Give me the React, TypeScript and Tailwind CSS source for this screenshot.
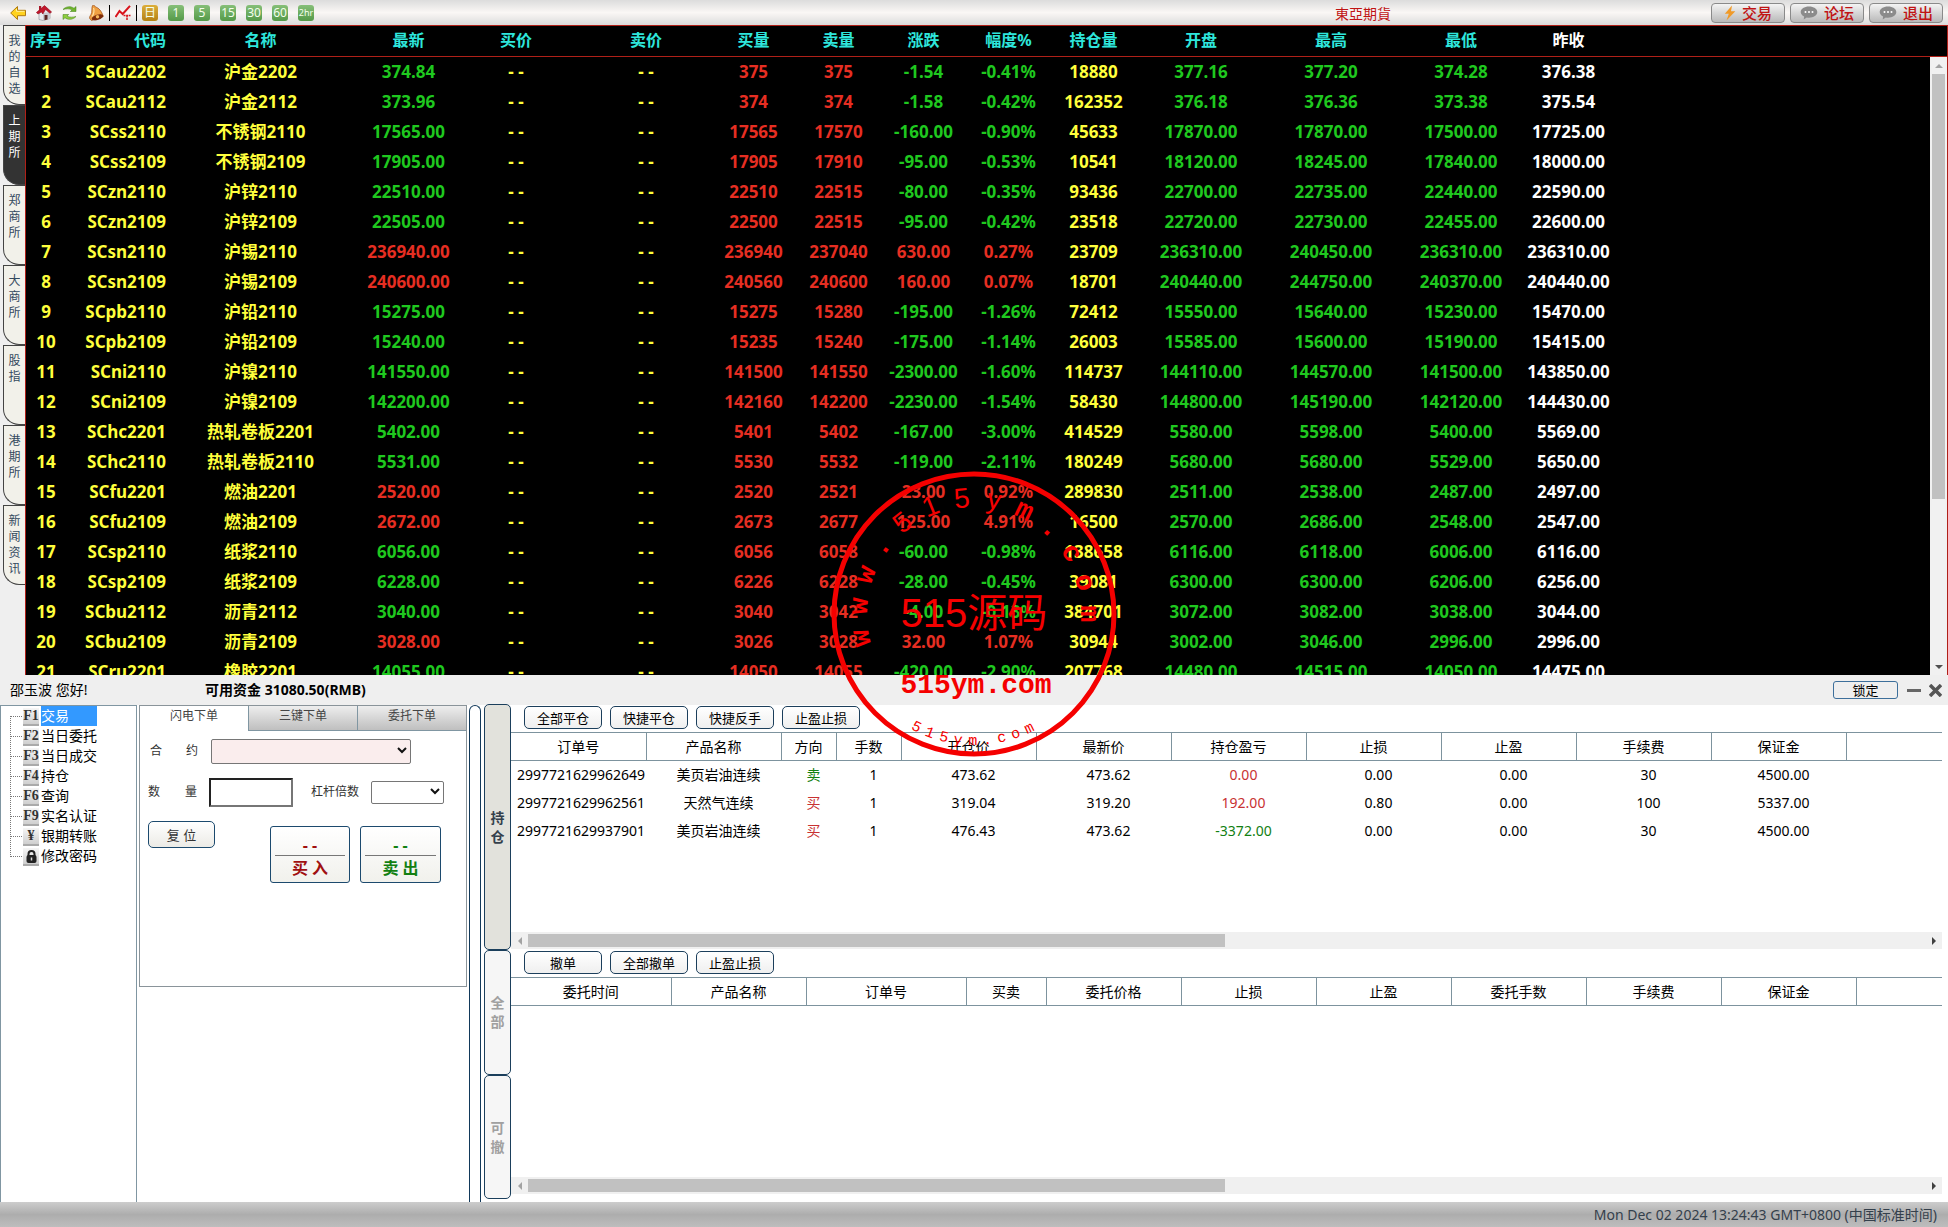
import type { ReactNode } from 'react';
import clsx from 'clsx';

const sideTabs = ['我的自选', '上期所', '郑商所', '大商所', '股指', '港期所', '新闻资讯'];

const quoteCols = [
	{ title: '序号', width: 'w-[40px]' },
	{ title: '代码', width: 'w-[100px]' },
	{ title: '名称', width: 'w-[200px]' },
	{ title: '最新', width: 'w-[85px]' },
	{ title: '买价', width: 'w-[130px]' },
	{ title: '卖价', width: 'w-[130px]' },
	{ title: '买量', width: 'w-[85px]' },
	{ title: '卖量', width: 'w-[85px]' },
	{ title: '涨跌', width: 'w-[85px]' },
	{ title: '幅度%', width: 'w-[85px]' },
	{ title: '持仓量', width: 'w-[85px]' },
	{ title: '开盘', width: 'w-[130px]' },
	{ title: '最高', width: 'w-[130px]' },
	{ title: '最低', width: 'w-[130px]' },
	{ title: '昨收', width: 'w-[85px]' },
];

// code, name, last, bid vol, ask vol, change, percent, open interest, open, high, low, prev close
const quotes: string[][] = [
	['SCau2202', '沪金2202', '374.84', '375', '375', '-1.54', '-0.41%', '18880', '377.16', '377.20', '374.28', '376.38'],
	['SCau2112', '沪金2112', '373.96', '374', '374', '-1.58', '-0.42%', '162352', '376.18', '376.36', '373.38', '375.54'],
	['SCss2110', '不锈钢2110', '17565.00', '17565', '17570', '-160.00', '-0.90%', '45633', '17870.00', '17870.00', '17500.00', '17725.00'],
	['SCss2109', '不锈钢2109', '17905.00', '17905', '17910', '-95.00', '-0.53%', '10541', '18120.00', '18245.00', '17840.00', '18000.00'],
	['SCzn2110', '沪锌2110', '22510.00', '22510', '22515', '-80.00', '-0.35%', '93436', '22700.00', '22735.00', '22440.00', '22590.00'],
	['SCzn2109', '沪锌2109', '22505.00', '22500', '22515', '-95.00', '-0.42%', '23518', '22720.00', '22730.00', '22455.00', '22600.00'],
	['SCsn2110', '沪锡2110', '236940.00', '236940', '237040', '630.00', '0.27%', '23709', '236310.00', '240450.00', '236310.00', '236310.00'],
	['SCsn2109', '沪锡2109', '240600.00', '240560', '240600', '160.00', '0.07%', '18701', '240440.00', '244750.00', '240370.00', '240440.00'],
	['SCpb2110', '沪铅2110', '15275.00', '15275', '15280', '-195.00', '-1.26%', '72412', '15550.00', '15640.00', '15230.00', '15470.00'],
	['SCpb2109', '沪铅2109', '15240.00', '15235', '15240', '-175.00', '-1.14%', '26003', '15585.00', '15600.00', '15190.00', '15415.00'],
	['SCni2110', '沪镍2110', '141550.00', '141500', '141550', '-2300.00', '-1.60%', '114737', '144110.00', '144570.00', '141500.00', '143850.00'],
	['SCni2109', '沪镍2109', '142200.00', '142160', '142200', '-2230.00', '-1.54%', '58430', '144800.00', '145190.00', '142120.00', '144430.00'],
	['SChc2201', '热轧卷板2201', '5402.00', '5401', '5402', '-167.00', '-3.00%', '414529', '5580.00', '5598.00', '5400.00', '5569.00'],
	['SChc2110', '热轧卷板2110', '5531.00', '5530', '5532', '-119.00', '-2.11%', '180249', '5680.00', '5680.00', '5529.00', '5650.00'],
	['SCfu2201', '燃油2201', '2520.00', '2520', '2521', '23.00', '0.92%', '289830', '2511.00', '2538.00', '2487.00', '2497.00'],
	['SCfu2109', '燃油2109', '2672.00', '2673', '2677', '125.00', '4.91%', '16500', '2570.00', '2686.00', '2548.00', '2547.00'],
	['SCsp2110', '纸浆2110', '6056.00', '6056', '6058', '-60.00', '-0.98%', '138658', '6116.00', '6118.00', '6006.00', '6116.00'],
	['SCsp2109', '纸浆2109', '6228.00', '6226', '6228', '-28.00', '-0.45%', '39081', '6300.00', '6300.00', '6206.00', '6256.00'],
	['SCbu2112', '沥青2112', '3040.00', '3040', '3042', '-4.00', '-0.13%', '384701', '3072.00', '3082.00', '3038.00', '3044.00'],
	['SCbu2109', '沥青2109', '3028.00', '3026', '3028', '32.00', '1.07%', '30944', '3002.00', '3046.00', '2996.00', '2996.00'],
	['SCru2201', '橡胶2201', '14055.00', '14050', '14055', '-420.00', '-2.90%', '207768', '14480.00', '14515.00', '14050.00', '14475.00'],
];

const menu = [
	{ icon: 'F1', label: '交易' },
	{ icon: 'F2', label: '当日委托' },
	{ icon: 'F3', label: '当日成交' },
	{ icon: 'F4', label: '持仓' },
	{ icon: 'F6', label: '查询' },
	{ icon: 'F9', label: '实名认证' },
	{ icon: '¥', label: '银期转账' },
	{ icon: 'lock', label: '修改密码' },
];

const positionCols = [
	{ title: '订单号', width: 'w-[135px]' },
	{ title: '产品名称', width: 'w-[135px]' },
	{ title: '方向', width: 'w-[55px]' },
	{ title: '手数', width: 'w-[65px]' },
	{ title: '开仓价', width: 'w-[135px]' },
	{ title: '最新价', width: 'w-[135px]' },
	{ title: '持仓盈亏', width: 'w-[135px]' },
	{ title: '止损', width: 'w-[135px]' },
	{ title: '止盈', width: 'w-[135px]' },
	{ title: '手续费', width: 'w-[135px]' },
	{ title: '保证金', width: 'w-[135px]' },
];

const positions = [
	['2997721629962649', '美页岩油连续', '卖', '1', '473.62', '473.62', '0.00', '0.00', '0.00', '30', '4500.00'],
	['2997721629962561', '天然气连续', '买', '1', '319.04', '319.20', '192.00', '0.80', '0.00', '100', '5337.00'],
	['2997721629937901', '美页岩油连续', '买', '1', '476.43', '473.62', '-3372.00', '0.00', '0.00', '30', '4500.00'],
];

const entrustCols = [
	{ title: '委托时间', width: 'w-[160px]' },
	{ title: '产品名称', width: 'w-[135px]' },
	{ title: '订单号', width: 'w-[160px]' },
	{ title: '买卖', width: 'w-[80px]' },
	{ title: '委托价格', width: 'w-[135px]' },
	{ title: '止损', width: 'w-[135px]' },
	{ title: '止盈', width: 'w-[135px]' },
	{ title: '委托手数', width: 'w-[135px]' },
	{ title: '手续费', width: 'w-[135px]' },
	{ title: '保证金', width: 'w-[135px]' },
];

const GREEN = 'text-[#1fc81f]';
const RED = 'text-[#e62e22]';
const YELLOW = 'text-[#ffff3c]';

function IconButton({ label, children }: { label: string; children: ReactNode }) {
	return (
		<button type="button" aria-label={label} className="flex h-4 w-4 items-center justify-center">
			{children}
		</button>
	);
}

function ToolIcons() {
	return (
		<div className="flex items-center gap-[10px] pl-[10px]">
			<IconButton label="后退">
				<svg width="16" height="16" viewBox="0 0 16 16">
					<path d="M7.5 1.5v3.8h8v5.4h-8v3.8L.7 8z" fill="#ffd21f" stroke="#b07a10" strokeLinejoin="round" />
					<path d="M6.5 4v2.3h8" fill="none" stroke="#fff0a0" />
				</svg>
			</IconButton>
			<IconButton label="首页">
				<svg width="16" height="16" viewBox="0 0 16 16">
					<path d="M3 7v7.5l4 1 7-2V7L8.500 3z" fill="#e9e9ee" stroke="#8a8a92" strokeWidth=".6" />
					<path d="M7 8l7-1v6.500l-7 2z" fill="#c9c9d1" />
					<path d="M8.500.600L15.600 7l-1.600 1.300L9.500 4.500 6.800 9 5.500 7 2 9 .400 7.500z" fill="#c3162c" stroke="#8c0f1f" strokeWidth=".6" />
					<path d="M3 1h2.200v3.500L3 6z" fill="#a8182a" />
					<path d="M8.500 10h3v4.500l-3 .8z" fill="#5a2222" />
				</svg>
			</IconButton>
			<IconButton label="刷新">
				<svg width="16" height="16" viewBox="0 0 16 16">
					<path d="M1 4.500C4 1 9.500 1 12 3.300L14 1.500v5H8.300L10 5C7.500 3.300 4 3.800 1 4.500z" fill="#6fb52c" stroke="#3f7d12" strokeWidth=".5" />
					<path d="M14 11.500C11 15 5.500 15 3 12.700L1 14.500v-5h5.700L5 11c2.500 1.700 6 1.200 9 .5z" fill="#8fce3f" stroke="#3f7d12" strokeWidth=".5" />
				</svg>
			</IconButton>
			<IconButton label="提醒">
				<svg width="16" height="16" viewBox="0 0 16 16">
					<path d="M4.500.600c1.500-.6 2.500.2 3 1.400C11 3 13.500 6 15.300 11.500L3.500 15.500C.5 13 1.500 12 3 9.500 4.500 7 3.300 3 4.500.600z" fill="#f0a042" stroke="#9a4a12" strokeWidth=".7" />
					<path d="M5.500 3c1 2 .5 6-1.500 8.500" fill="none" stroke="#ffe0a0" strokeWidth="1.200" />
					<ellipse cx="9.500" cy="12.300" rx="6" ry="2.600" transform="rotate(-18 9.500 12.300)" fill="#7c2d0c" />
					<circle cx="9.500" cy="11.800" r="1.700" fill="#f7b85c" />
				</svg>
			</IconButton>
			<span className="-mx-[5px] h-4 w-px bg-black" />
			<IconButton label="走势图">
				<svg width="16" height="16" viewBox="0 0 16 16" fill="none" stroke="#d8141c">
					<path d="M.5 12l4-6 3.200 3L15 .800" strokeWidth="2" />
					<path d="M8.500 10.500h7M12 10.500v5" strokeWidth="1.500" strokeDasharray="2 .6" />
				</svg>
			</IconButton>
			<span className="-mx-[5px] h-4 w-px bg-black" />
			{['日', '1', '5', '15', '30', '60', '2hr'].map((item, i) => (
				<button
					key={item}
					type="button"
					className={clsx(
						'flex h-4 w-4 items-center justify-center rounded-[3px] leading-4 text-[#f4ffee]',
						i === 0 ? 'bg-linear-to-b from-[#dcae3a] to-[#b58212] text-[12px]' : 'bg-linear-to-b from-[#86bf78] to-[#549a48]',
						i > 0 && i < 6 && 'text-[12px]',
						i === 6 && 'text-[9px]',
					)}
				>
					{item}
				</button>
			))}
		</div>
	);
}

function Chat() {
	return (
		<svg width="18" height="14" viewBox="0 0 18 14">
			<path d="M9 .5c4.700 0 8.300 2.400 8.300 5.600S13.700 11.700 9 11.700c-.8 0-1.500 0-2.200-.2L3.700 13.600l.4-3C2 9.600.700 8 .700 6.100.700 2.900 4.300.5 9 .5z" fill="#8b8b8b" />
			<circle cx="5.500" cy="6" r="1" fill="#fff" />
			<circle cx="9" cy="6" r="1" fill="#fff" />
			<circle cx="12.500" cy="6" r="1" fill="#fff" />
		</svg>
	);
}

function TopBar() {
	const links = ['交易', '论坛', '退出'];
	return (
		<header className="flex h-[25px] shrink-0 items-center bg-linear-to-b from-[#dcdcdc] via-[#faf7f5] to-[#dcdcdc]">
			<ToolIcons />
			<h1 className="mr-[320px] ml-auto font-['Noto_Sans_CJK_TC',sans-serif] text-[14px] leading-4 text-[#c01414]">東亞期貨</h1>
			<div className="flex gap-[5px] pr-[5px]">
				{links.map((link, i) => (
					<button
						key={link}
						type="button"
						className="flex h-5 w-[74px] items-center justify-center gap-[6px] rounded-[4px] border border-[#8a8a8a] bg-linear-to-b from-[#f4f4f4] to-[#b9b9b9] text-[15px] leading-4 font-medium text-[#c01414]"
					>
						{i === 0 ? (
							<svg width="12" height="16" viewBox="0 0 12 16">
								<path d="M8 .5L.800 8.700h4L2.500 15.500 11.300 6.300H7z" fill="#f09a28" />
							</svg>
						) : (
							<Chat />
						)}
						{link}
					</button>
				))}
			</div>
		</header>
	);
}

function SideTabs() {
	return (
		<nav className="flex w-[25px] shrink-0 flex-col bg-[#efefef] pl-[3px]">
			{sideTabs.map((tab) => (
				<button
					key={tab}
					type="button"
					className={clsx(
						'flex h-20 w-[22px] justify-center rounded-bl-[16px] border border-r-0 border-[#444] pt-[7px] text-[12px] leading-4',
						tab === '上期所' ? 'bg-[#333] text-white' : 'bg-[#f2f1ea] text-[#34495e]',
					)}
				>
					<span className="w-[12px] break-all">{tab}</span>
				</button>
			))}
		</nav>
	);
}

function QuoteRow({ row, index }: { row: string[]; index: number }) {
	const [code, name, last, bidVol, askVol, change, percent, interest, open, high, low, prev] = row;
	const trend = change.startsWith('-') ? GREEN : RED;
	return (
		<tr className="h-[30px]">
			<td className={YELLOW}>{index + 1}</td>
			<td className={clsx('text-right', YELLOW)}>{code}</td>
			<td className={clsx('pr-[11px]', YELLOW)}>{name}</td>
			<td className={trend}>{last}</td>
			<td className={YELLOW}>- -</td>
			<td className={YELLOW}>- -</td>
			<td className={RED}>{bidVol}</td>
			<td className={RED}>{askVol}</td>
			<td className={trend}>{change}</td>
			<td className={trend}>{percent}</td>
			<td className={YELLOW}>{interest}</td>
			<td className={GREEN}>{open}</td>
			<td className={GREEN}>{high}</td>
			<td className={GREEN}>{low}</td>
			<td className="text-white">{prev}</td>
			<td />
		</tr>
	);
}

function Market() {
	return (
		<section className="flex min-h-0 flex-1 bg-[#efefef]">
			<SideTabs />
			<div className="relative min-w-0 flex-1 overflow-hidden border border-b-0 border-[#b02018] bg-black">
				<table className="w-full table-fixed border-collapse text-center text-[17px] leading-[29px] font-bold whitespace-nowrap">
					<thead>
						<tr className="h-[30px] border-b border-[#b02018] text-[16px]">
							{quoteCols.map((col) => (
								<th
									key={col.title}
									className={clsx(
										col.width,
										col.title === '昨收' ? 'text-white' : 'text-[#2ee6dc]',
										col.title === '代码' && 'text-right',
										col.title === '名称' && 'pr-[11px]',
									)}
								>
									{col.title}
								</th>
							))}
							<th />
						</tr>
					</thead>
					<tbody>
						{quotes.map((row, i) => (
							<QuoteRow key={row[0]} row={row} index={i} />
						))}
					</tbody>
				</table>
				<div className="absolute top-[31px] right-0 bottom-0 flex w-[17px] flex-col items-center bg-[#f1f1f1]">
					<span className="flex h-[17px] shrink-0 items-center">
						<i className="border-x-4 border-b-4 border-x-transparent border-b-[#a3a3a3]" />
					</span>
					<span className="h-[425px] w-[13px] bg-[#c1c1c1]" />
					<span className="mt-auto flex h-[17px] shrink-0 items-center">
						<i className="border-x-4 border-t-4 border-x-transparent border-t-[#505050]" />
					</span>
				</div>
			</div>
		</section>
	);
}

function AccountBar() {
	return (
		<div className="flex h-[30px] shrink-0 items-center bg-[#efefef] text-[14px] leading-5 text-black">
			<span className="w-[205px] pl-[10px]">邵玉波 您好!</span>
			<b>可用资金 31080.50(RMB)</b>
			<button type="button" className="ml-auto h-[18px] w-[65px] rounded-[3px] border border-[#3d6f9b] text-[13px] leading-4">
				锁定
			</button>
			<button type="button" aria-label="最小化" className="ml-[9px] flex h-4 w-[14px] items-center">
				<span className="h-[3px] w-full bg-[#666]" />
			</button>
			<button type="button" aria-label="关闭" className="mr-[6px] ml-2">
				<svg width="13" height="13" viewBox="0 0 13 13" stroke="#555" strokeWidth="3.500">
					<path d="M1 1l11 11M12 1L1 12" />
				</svg>
			</button>
		</div>
	);
}

function Menu() {
	return (
		<nav className="w-[137px] shrink-0 border border-b-0 border-[#8096a2] bg-white pl-[9px]">
			<ul>
				{menu.map((item, i) => (
					<li key={item.label} className="flex h-5">
						<span className={clsx('w-[13px] shrink-0', i > 0 && '-mt-[10px]', i === 0 && 'pt-[10px]')}>
							<i className={clsx('block w-3 border-b border-l border-dotted border-[#777]', i > 0 ? 'h-[21px]' : 'h-px')} />
						</span>
						<a href="#" className="flex items-start text-[14px] leading-5 text-black">
							<span className="mt-[2px] flex h-[18px] w-4 items-center justify-center border-b-2 border-[#aaa] bg-linear-to-b from-[#f6f6f6] to-[#cfcfcf] font-['Liberation_Serif',serif] text-[14px] leading-4 font-bold text-[#333]">
								{item.icon === 'lock' ? (
									<svg width="11" height="13" viewBox="0 0 11 13">
										<path d="M2.500 6V4a3 3 0 016 0v2" fill="none" stroke="#222" strokeWidth="2" />
										<rect x=".5" y="5" width="10" height="8" rx="2" fill="#222" />
										<path d="M5.500 7.500v3" stroke="#ddd" strokeWidth="1.500" />
									</svg>
								) : (
									item.icon
								)}
							</span>
							<span className={clsx('ml-[2px]', i === 0 && 'w-14 bg-[#3399ff] text-white')}>{item.label}</span>
						</a>
					</li>
				))}
			</ul>
		</nav>
	);
}

function Select({ id, className }: { id: string; className: string }) {
	return (
		<span className="relative inline-flex">
			<select id={id} className={clsx('appearance-none rounded-[2px] border border-[#767676]', className)} />
			<svg className="pointer-events-none absolute top-1/2 right-1 -mt-1" width="10" height="7" viewBox="0 0 10 7">
				<path d="M1 1l4 4 4-4" fill="none" stroke="#111" strokeWidth="2" />
			</svg>
		</span>
	);
}

function OrderForm() {
	const tabs = ['闪电下单', '三键下单', '委托下单'];
	return (
		<form className="ml-[2px] flex h-[282px] w-[328px] shrink-0 flex-col border border-[#8a949a] bg-white text-[12px] leading-4 text-[#333]">
			<div className="flex h-[25px] w-full text-[#444]">
				{tabs.map((tab, i) => (
					<button
						key={tab}
						type="button"
						className={clsx(
							'flex-1 pb-[5px]',
							i === 0 ? 'bg-white' : 'border-b border-l border-[#8096a2] bg-linear-to-b from-[#eee] to-[#bfbfbf]',
						)}
					>
						{tab}
					</button>
				))}
			</div>
			<div className="mt-[7px] flex h-[26px] w-full items-center pl-[10px]">
				<label htmlFor="contract" className="flex w-12 justify-between">
					<span>合</span>
					<span>约</span>
				</label>
				<span className="ml-[13px] flex">
					<Select id="contract" className="h-[25px] w-[200px] bg-[#faeded]" />
				</span>
			</div>
			<div className="mt-[13px] flex h-[30px] items-center pl-[8px]">
				<label htmlFor="amount" className="flex w-[49px] justify-between">
					<span>数</span>
					<span>量</span>
				</label>
				<input id="amount" type="text" className="ml-3 h-[29px] w-[84px] border-2 border-t-[#222] border-r-[#767676] border-b-[#767676] border-l-[#222] px-1" />
				<label htmlFor="lever" className="mr-3 ml-[18px]">
					杠杆倍数
				</label>
				<Select id="lever" className="h-[23px] w-[73px] bg-white" />
			</div>
			<div className="mt-[14px] flex pl-2">
				<button type="button" className="h-[27px] w-[67px] rounded-[5px] border border-[#1c4a6e] bg-linear-to-b from-white to-[#ecebe6] text-[13px] leading-4">
					复 位
				</button>
				<div className="mt-[5px] ml-[55px] flex gap-[10px] text-[16px] leading-5 font-bold">
					<button type="button" className="flex h-[57px] w-20 flex-col items-center rounded-[3px] border border-[#1c4a6e] bg-linear-to-b from-white to-[#f1f1ec] px-1 text-[#a01010]">
						<span className="w-full border-b border-[#777] pt-2">- -</span>
						<span className="pt-[2px]">买 入</span>
					</button>
					<button type="button" className="flex h-[57px] w-[81px] flex-col items-center rounded-[3px] border border-[#1c4a6e] bg-linear-to-b from-white to-[#f1f1ec] px-1 text-[#128012]">
						<span className="w-full border-b border-[#777] pt-2">- -</span>
						<span className="pt-[2px]">卖 出</span>
					</button>
				</div>
			</div>
		</form>
	);
}

function ViewTabs() {
	const base = 'flex items-center justify-center rounded-[5px] border border-[#1b3f5c] text-[14px] leading-[19px] font-bold';
	return (
		<>
			<div className="ml-[2px] w-3 shrink-0 rounded-t-[6px] border border-b-0 border-[#12395a]" />
			<div className="-mt-px ml-[3px] flex w-[27px] shrink-0 flex-col pb-[3px]">
				<button type="button" className={clsx(base, 'h-[246px] bg-[#e2e2dc] text-[#34404c]')}>
					<span className="w-[14px] break-all">持仓</span>
				</button>
				<button type="button" className={clsx(base, 'flex-1 bg-[#f6f6f6] text-[#a0a0a0]')}>
					<span className="w-[14px] break-all">全部</span>
				</button>
				<button type="button" className={clsx(base, 'flex-1 bg-[#f6f6f6] text-[#a0a0a0]')}>
					<span className="w-[14px] break-all">可撤</span>
				</button>
			</div>
		</>
	);
}

function HScroll() {
	return (
		<div className="mt-auto flex h-[17px] shrink-0 items-center bg-[#f0f0f0]">
			<span className="flex w-[17px] justify-center">
				<i className="border-y-4 border-r-4 border-y-transparent border-r-[#a3a3a3]" />
			</span>
			<span className="h-[13px] w-[697px] bg-[#c1c1c1]" />
			<span className="ml-auto flex w-[17px] justify-center">
				<i className="border-y-4 border-l-4 border-y-transparent border-l-[#404040]" />
			</span>
		</div>
	);
}

type GridProps = {
	actions: string[];
	cols: { title: string; width: string }[];
	rows?: string[][];
	className: string;
};

function tone(col: number, value: string) {
	if (col === 2) return value === '卖' ? 'text-[#128012]' : 'text-[#c83232]';
	if (col === 6) return value.startsWith('-') ? 'text-[#128012]' : 'text-[#c83232]';
	return undefined;
}

function OrderGrid({ actions, cols, rows = [], className }: GridProps) {
	return (
		<div className={clsx('flex flex-col', className)}>
			<div className="flex gap-2 pt-px pb-[3px] pl-[13px]">
				{actions.map((action) => (
					<button
						key={action}
						type="button"
						className="h-[23px] w-[78px] rounded-[5px] border border-[#1c3f5c] bg-linear-to-b from-white to-[#efefef] text-[13px] leading-5"
					>
						{action}
					</button>
				))}
			</div>
			<table className="w-full table-fixed border-collapse text-center text-[14px] leading-5 whitespace-nowrap">
				<thead>
					<tr className="h-[28px] border-y border-[#7d939e]">
						{cols.map((col) => (
							<th key={col.title} className={clsx('border-r border-[#7d939e] font-normal', col.width)}>
								{col.title}
							</th>
						))}
						<th />
					</tr>
				</thead>
				<tbody>
					{rows.map((row) => (
						<tr key={row[0]} className="h-7">
							{row.map((value, i) => (
								<td key={i} className={clsx(i === 0 ? 'pl-[6px] text-left' : 'pl-[10px]', tone(i, value))}>
									{value}
								</td>
							))}
							<td />
						</tr>
					))}
				</tbody>
			</table>
			<HScroll />
		</div>
	);
}

function TradePanel() {
	return (
		<section className="flex shrink-0 bg-white text-black">
			<Menu />
			<OrderForm />
			<ViewTabs />
			<div className="mr-[6px] min-w-0 flex-1 pb-2">
				<OrderGrid
					className="h-[244px]"
					actions={['全部平仓', '快捷平仓', '快捷反手', '止盈止损']}
					cols={positionCols}
					rows={positions}
				/>
				<OrderGrid className="mt-px h-[244px]" actions={['撤单', '全部撤单', '止盈止损']} cols={entrustCols} />
			</div>
		</section>
	);
}

function Stamp() {
	return (
		<svg
			className="pointer-events-none absolute top-1/2 left-1/2 -translate-x-1/2 -translate-y-1/2"
			width="286"
			height="286"
			viewBox="-143 -143 286 286"
			fill="#f50000"
			textAnchor="middle"
		>
			<circle r="140" fill="none" stroke="#f50000" strokeWidth="5" />
			<g className="font-['Liberation_Mono',monospace] text-[28px]">
				{'www.515ym.com'.split('').map((char, i) => (
					<text
						key={i}
						y="-107"
						transform={`rotate(${-102 + i * 16})`}
						className={/[\dy]/.test(char) ? "font-['Liberation_Sans',sans-serif]" : 'font-bold'}
					>
						{char}
					</text>
				))}
			</g>
			<text y="13" className="font-['Liberation_Sans','Noto_Sans_CJK_SC',sans-serif] text-[40px]">
				515源码
			</text>
			<text x="2" y="79" className="font-['Liberation_Mono',monospace] text-[28px] font-bold">
				515ym.com
			</text>
			<g className="font-['Liberation_Mono',monospace] text-[15px]">
				{'515ym.com'.split('').map((char, i) => (
					<text key={i} y="131" transform={`rotate(${27 - i * 6.6})`}>
						{char}
					</text>
				))}
			</g>
		</svg>
	);
}

export default function App() {
	return (
		<div className="relative flex h-screen flex-col overflow-hidden bg-white font-['Noto_Sans','Noto_Sans_CJK_SC',sans-serif]">
			<TopBar />
			<Market />
			<AccountBar />
			<TradePanel />
			<footer className="flex h-[25px] shrink-0 items-center justify-end bg-linear-to-b from-[#cdcdcd] via-[#adadad] to-[#bdbdbd] pr-[11px] text-[14px] leading-4 text-[#34404c]">
				Mon Dec 02 2024 13:24:43 GMT+0800 (中国标准时间)
			</footer>
			<Stamp />
		</div>
	);
}
